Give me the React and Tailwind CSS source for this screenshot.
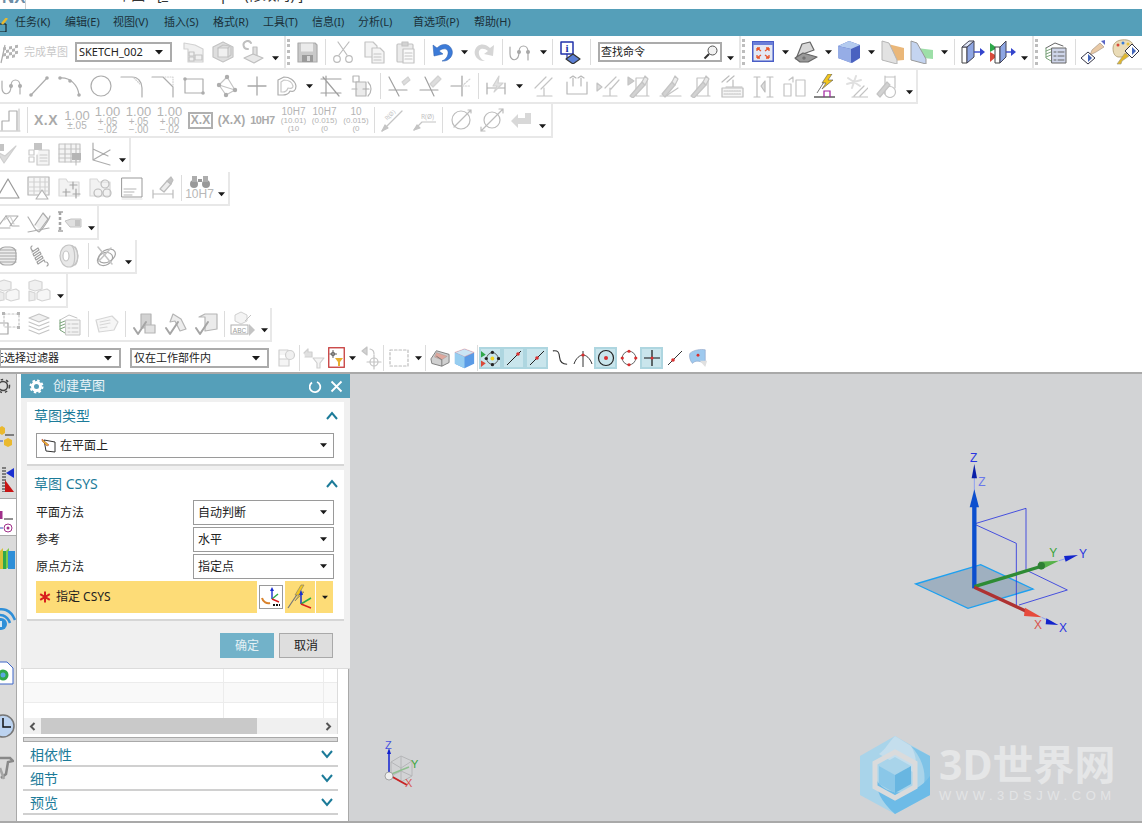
import React from "react";

const g = "#adadad";
const lg = "#d2d2d2";
const V = ({ children, w = 24, h = 24, c = g, sw = 1.2 }) => (
  <svg width={w} height={h} viewBox={`0 0 ${w} ${h}`} fill="none" stroke={c} strokeWidth={sw} strokeLinecap="round" strokeLinejoin="round" className="shrink-0">
    {children}
  </svg>
);
const S = ({ c = "w-[31px]", children }) => <div className={`${c} h-full flex items-center justify-center shrink-0`}>{children}</div>;
const Sep = ({ c = "w-[6px]" }) => (
  <div className={`${c} h-full flex items-center justify-center shrink-0`}>
    <div className="w-[1px] h-[26px] bg-[#dcdcdc]" />
  </div>
);
const Tri = ({ w = 8 }) => (
  <svg width={w} height="5" viewBox="0 0 8 5" className="shrink-0"><path d="M0 0H8L4 4.5Z" fill="#1a1a1a" /></svg>
);
const Ar = ({ c = "w-[12px]", end }) => (
  <div className={`${c} h-full flex justify-center shrink-0 items-center ${end ? "pt-[13px]" : ""}`}><Tri w={7} /></div>
);
const Bar = () => <div className="w-[2px] h-full bg-[#e6e6e6] shrink-0" />;
const Dots = () => (
  <div className="w-[4px] h-full flex justify-center items-center shrink-0">
    <div className="w-[3px] h-[26px] border-l-[3px] border-dotted border-[#bdbdbd]" />
  </div>
);

/* Row 1 icons */
const Flag = () => (
  <svg width="18" height="24" viewBox="0 0 18 24" className="shrink-0">
    <path d="M1 23L5 5" stroke="#aaa" strokeWidth="1.2" />
    <g transform="skewY(-10) translate(0 3)" fill="#b5b5b5">
      <rect x="3" y="5" width="3" height="3" /><rect x="9" y="5" width="3" height="3" /><rect x="15" y="5" width="3" height="3" />
      <rect x="6" y="8" width="3" height="3" /><rect x="12" y="8" width="3" height="3" />
      <rect x="3" y="11" width="3" height="3" /><rect x="9" y="11" width="3" height="3" /><rect x="15" y="11" width="3" height="3" />
      <rect x="6" y="14" width="3" height="3" /><rect x="12" y="14" width="3" height="3" />
    </g>
  </svg>
);
const SheetG = () => (
  <V c="#c2c2c2"><path d="M3 3L14 5L22 9V22H7V9H3Z" fill="#f0f0f0" stroke={lg} /><rect x="8" y="12" width="5" height="4" /><rect x="8" y="17" width="5" height="4" /><rect x="14" y="15" width="7" height="5" /></V>
);
const CubeG = () => (
  <V c="#c4c4c4"><path d="M12 2L22 7V17L12 22L2 17V7Z" fill="#dedede" /><path d="M7 8H17V17H7Z" fill="#f0f0f0" /><path d="M7 8L12 5L19 6L17 8M17 17L20 15V7" /></V>
);
const RobotG = () => (
  <V c="#bfbfbf"><path d="M10 3A4 4 0 1 0 7 9" strokeWidth="2" /><path d="M12 7H16V16H12Z" fill="#e0e0e0" /><path d="M3 18L12 14L22 18L13 23Z" fill="#e8e8e8" /></V>
);
const SaveG = () => (
  <V c="#ababab"><path d="M3 3H20L22 5V22H3Z" fill="#c9c9c9" /><rect x="6" y="3.5" width="12" height="8" fill="#ebebeb" stroke="none" /><rect x="7" y="15" width="11" height="7" fill="#9a9a9a" stroke="none" /><rect x="12" y="16" width="3" height="5" fill="#d8d8d8" stroke="none" /></V>
);
const Scissors = () => (
  <V c="#bcbcbc"><path d="M8 15L18 2M16 15L7 2" /><circle cx="6" cy="19" r="3.3" /><circle cx="18" cy="19" r="3.3" /></V>
);
const CopyG = () => (
  <V c="#c4c4c4"><path d="M2 2H10L14 6V17H2Z" fill="#f4f4f4" /><path d="M9 8H17L21 12V23H9Z" fill="#f4f4f4" /><path d="M11 14H18M11 17H18M11 20H18" /></V>
);
const PasteG = () => (
  <V c="#c4c4c4"><rect x="3" y="4" width="16" height="18" rx="1" fill="#ebebeb" /><rect x="8" y="2" width="6" height="4" fill="#d2d2d2" /><path d="M9 9H20V23H9Z" fill="#fafafa" /><path d="M11 13H18M11 16H18M11 19H18" /></V>
);
const Undo = () => (
  <svg width="24" height="24" viewBox="0 0 24 24" className="shrink-0"><path d="M2 5L3 16L12 14L8 11C13 7 18 9 17 14C16.6 17 14 20 11 21C17 22 23 16 21 10C19 4 12 2 6 8Z" fill="#3c7bd8" stroke="#2a5aa8" strokeWidth=".5" /></svg>
);
const Redo = () => (
  <svg width="24" height="24" viewBox="0 0 24 24" className="shrink-0"><path d="M22 5L21 16L12 14L16 11C11 7 6 9 7 14C7.4 17 10 20 13 21C7 22 1 16 3 10C5 4 12 2 18 8Z" fill="#d6d6d6" /></svg>
);
const Curve = ({ c = "#a8a8a8" }) => (
  <V c={c}><path d="M2 14V7M2 14C2 22 11 22 11 12C11 4 20 4 20 12V20" /><circle cx="11" cy="12" r="1.4" fill={c} /><circle cx="20" cy="12" r="1.4" fill={c} /></V>
);
const Info = () => (
  <V c="#2233aa"><rect x="2" y="2" width="12" height="12" fill="#fff" strokeWidth="1.5" /><text x="8" y="12" fontSize="11" fontWeight="700" textAnchor="middle" fill="#2233aa" stroke="none" fontFamily="Liberation Serif">i</text><path d="M8 14V18" /><path d="M14 14L21 19L14 24L7 19Z" fill="#5b7fd6" stroke="#333" /></V>
);
const Fit = () => (
  <svg width="22" height="22" viewBox="0 0 22 22" className="shrink-0"><rect x=".75" y=".75" width="20.5" height="19.5" fill="#e3e8f3" stroke="#4a5ec7" strokeWidth="1.5" /><rect x="1" y="1" width="20" height="3" fill="#6b7fd8" /><path d="M5 7H8M5 7V10M5 7L9 10M17 7H14M17 7V10M17 7L13 10M5 17H8M5 17V14M5 17L9 14M17 17H14M17 17V14M17 17L13 14" stroke="#e8552c" strokeWidth="1.3" fill="none" /></svg>
);
const Shade = () => (
  <V c="#666"><path d="M2 19L8 4L16 2L20 10L9 14Z" fill="#d8d8d8" /><path d="M1 18L9 13L23 17L14 22H6Z" fill="#999" /><circle cx="10" cy="18" r="1" fill="#eee" /></V>
);
const BlueCube = () => (
  <svg width="24" height="24" viewBox="0 0 24 24" className="shrink-0"><path d="M12 1L23 5V18L15 23L1 18V6Z" fill="#4a62c0" /><path d="M1 6L12 1L23 5L14 9Z" fill="#b4cbef" /><path d="M1 6L14 9V23L1 18Z" fill="#96ade6" /></svg>
);
const PlaneOr = () => (
  <svg width="24" height="24" viewBox="0 0 24 24" className="shrink-0"><path d="M8 4L24 8V20L12 21Z" fill="#eab779" /><path d="M2 1L9 3L17 20V24L2 20Z" fill="#e2e2e2" stroke="#b5b5b5" /></svg>
);
const PlaneGr = () => (
  <svg width="24" height="24" viewBox="0 0 24 24" className="shrink-0"><path d="M8 8L24 10V19L14 18Z" fill="#9ddfa8" /><path d="M2 1L8 3L17 19V24L2 20Z" fill="#c4d4f0" stroke="#999" /></svg>
);
const Slab = () => (
  <svg width="24" height="24" viewBox="0 0 24 24" className="shrink-0"><path d="M1 7L6 7V23H1Z" fill="#fff" stroke="#444" /><path d="M6 7L13 1V17L6 23Z" fill="#8ea6e3" stroke="#445" /><path d="M1 7L8 1H13L6 7Z" fill="#dfe6f6" stroke="#445" /><path d="M13 12H20" stroke="#3344cc" strokeWidth="1.4" /><path d="M19 8L24 12L19 16Z" fill="#3344cc" /></svg>
);
const Slab2 = () => (
  <svg width="26" height="24" viewBox="0 0 26 24" className="shrink-0"><path d="M0 3L7 8L0 12Z" fill="#2ea84a" /><path d="M0 12L7 16L0 22Z" fill="#d94a3a" /><path d="M5 7L10 7V23H5Z" fill="#fff" stroke="#444" /><path d="M10 7L16 1V17L10 23Z" fill="#8ea6e3" stroke="#445" /><path d="M16 12H22" stroke="#3344cc" strokeWidth="1.4" /><path d="M21 8L26 12L21 16Z" fill="#3344cc" /></svg>
);
const LayerList = ({ c = "#666", fill = "#cfd6ea" }) => (
  <V c={c} sw={1}><path d="M2 8L11 3L19 6" /><path d="M2 11L7 9M2 14L7 12M2 17L7 15M2 8V18L7 21" stroke="#7aa37a" /><rect x="8" y="8" width="14" height="15" fill={fill} /><path d="M14 12H20M14 16H20M14 20H20M10 12H12M10 16H12M10 20H12" /></V>
);
const Hand = () => (
  <svg width="26" height="26" viewBox="0 0 26 26" className="shrink-0"><path d="M12 11L20 4L24 8L16 13L10 16Z" fill="#e9c9a5" stroke="#a98" strokeWidth=".7" /><path d="M21 2L25 1L25 6Z" fill="#5a66c5" /><path d="M8 13L15 19L8 25L1 19Z" fill="#fff" stroke="#334" /><path d="M8 15L12 19L8 23Z" fill="#4466bb" /></svg>
);
const Palette = () => (
  <svg width="28" height="26" viewBox="0 0 28 26" className="shrink-0"><path d="M2 9C2 2 10 0 16 1C21 2 23 6 22 9L16 14L14 18H7C3 17 2 13 2 9Z" fill="#eadcb7" stroke="#a9986e" strokeWidth=".8" /><circle cx="7" cy="6" r="1.5" fill="#d94a3a" /><circle cx="12" cy="4" r="1.5" fill="#3a7dd9" /><circle cx="17" cy="5" r="1.5" fill="#e9c23a" /><path d="M6 25L14 14L18 17L11 22L10 25Z" fill="#e0b62e" stroke="#998" strokeWidth=".6" /><path d="M21 5L28 12L21 19L14 12Z" fill="#fff" stroke="#334" /><path d="M21 8L25 12L21 16Z" fill="#4466bb" /></svg>
);

/* Row 2 icons */
const Nd = ({ x, y, r = 1.8 }) => <circle cx={x} cy={y} r={r} fill={g} stroke="none" />;
const LineI = () => <V><path d="M4 21L20 4" /><Nd x={4} y={21} /><Nd x={20} y={4} /></V>;
const ArcI = () => <V><path d="M2 4C12 3 20 11 21 21" /><Nd x={2} y={4} /><Nd x={12} y={7} /><Nd x={21} y={21} /></V>;
const CircleI = () => <V><circle cx="12" cy="12" r="10" /></V>;
const Fillet = () => <V><path d="M1 3H12C18 3 22 8 22 14V23" /><path d="M14 4L21 11" stroke={lg} strokeDasharray="1 1.5" /></V>;
const Chamfer = () => <V><path d="M1 3H12L22 13V23" /><path d="M14 3H22V11" stroke={lg} strokeDasharray="1 1.5" /></V>;
const RectI = () => <V><path d="M3 5H21V19H3Z" /><Nd x={3} y={5} /><Nd x={21} y={19} /></V>;
const Poly = () => <V><path d="M12 3L4 11L11 21L20 16L12 3ZM4 11L20 16" stroke="#c4c4c4" /><Nd x={12} y={3} r={2.2} /><Nd x={4} y={11} r={2.2} /><Nd x={11} y={21} r={2.2} /><Nd x={20} y={16} r={2.2} /></V>;
const Plus = () => <V c="#a8a8a8" sw={1.3}><path d="M12 3V21M3 12H21" /></V>;
const Heart = () => <V><path d="M3 6L9 3C14 3 20 6 21 12C21 17 18 18 15 17C14 20 10 21 8 21H3Z" /><path d="M6 8L9 6C13 6 17 8 18 12C18 14 16 15 13 14C12 17 10 18 8 18H6Z" stroke="#c8c8c8" /></V>;
const Trim = () => <V c="#a0a0a0"><path d="M2 5H22M2 19H22M4 3L20 22M7 2V22" /></V>;
const Convert = () => <V c="#b5b5b5"><rect x="4" y="2" width="6" height="6" /><path d="M7 8H17V22H7Z" fill="#ebebeb" /><path d="M3 15H8M19 8C23 12 23 18 19 22" /><path d="M20 15H14" stroke="#aaa" /></V>;
const X1 = () => <V c="#a0a0a0"><path d="M2 3L12 22M2 16H20" /><path d="M15 8L21 3L23 6L17 11Z" fill="#ddd" stroke={lg} /></V>;
const X2 = () => <V c="#a0a0a0"><path d="M7 3L16 22M2 16H20" /><path d="M12 10L20 2L23 5L15 13Z" fill="#ddd" stroke={lg} /></V>;
const X3 = () => <V c="#a0a0a0"><path d="M3 12H14M14 2V22" /><path d="M14 12L22 5M14 12L22 12" stroke={lg} strokeDasharray="1.5 1.5" /></V>;
const Dim = () => <V><path d="M2 9V20M20 9V20M2 14H20" /><path d="M14 2L8 12H12L9 18L18 9H13Z" fill="#e2e2e2" stroke={lg} /></V>;
const Para = () => <V c="#c4c4c4"><path d="M3 14L14 3M9 15L20 4M12 14V22M5 22H20" /></V>;
const BracketPin = () => <V c="#b8b8b8"><path d="M2 8V20H22V8M8 4V12M16 4V12" /><path d="M5 4L8 2L11 4M13 4L16 2L19 4" /></V>;
const ParaArrow = () => <V c="#c4c4c4"><path d="M9 14L20 3M15 15L23 6M14 14V22M7 22H21" /><path d="M1 9L6 13L1 17Z" fill="#ddd" /></V>;
const Wrench = ({ k }) => (
  <V c="#c4c4c4"><path d="M9 4V22H22M20 4V22M9 4H20" /><path d="M3 22L15 8L18 11L6 24Z" fill="#d2d2d2" /><path d="M15 8L18 2L21 5L18 11Z" fill="#e8e8e8" />{k ? <path d="M1 3L7 7L1 11Z" fill="#ccc" /> : null}</V>
);
const Wrench2 = () => <V c="#c4c4c4"><path d="M2 22H23M8 22L20 14" /><path d="M4 20L14 8L17 11L7 23Z" fill="#d2d2d2" /><path d="M14 8L17 2L20 5L17 11Z" fill="#ececec" /></V>;
const Keyb = () => <V c="#bdbdbd"><path d="M2 8L9 2M7 8L14 2M13 6V13M6 13H22" /><rect x="2" y="14" width="21" height="9" fill="#f6f6f6" /><path d="M4 17H21M4 20H21" strokeDasharray="1.5 1" /></V>;
const Sym = () => <V c="#bdbdbd"><path d="M3 3H9M3 23H9M6 3V23M16 3H22M16 23H22M19 3V23" /><path d="M10 12L14 7V18Z" fill="#ddd" /></V>;
const Rebar = () => <V c="#c4c4c4"><path d="M2 22V10H9V22H2ZM14 22V6H23V22H14Z" /><path d="M7 6L11 3V8" /></V>;
const Bolt = () => (
  <svg width="24" height="24" viewBox="0 0 24 24" className="shrink-0"><path d="M15 0L9 9H13L9 15L20 6H15L19 0Z" fill="#f2c61f" stroke="#555" strokeWidth=".6" /><path d="M4 19L11 8" stroke="#777" /><path d="M1 23H22" stroke="#333" strokeWidth="1.2" /><path d="M11 23V17H17V23" stroke="#a020a0" strokeWidth="1.2" fill="none" /></svg>
);
const Spark = () => <V c="#c4c4c4"><path d="M4 4L16 12M12 2L8 14M3 10L17 6" stroke="#e0e0e0" strokeWidth="2" /><path d="M10 22L20 12M16 22L24 14M8 23H24" /></V>;
const WCirc = () => <V c="#c4c4c4"><path d="M10 2V20M20 2V14M10 3H20" /><circle cx="15" cy="18" r="5.5" /><path d="M2 20L12 8L15 11L5 23Z" fill="#d2d2d2" /></V>;

/* Row 3 */
const Dimbox = () => <V><path d="M4 22V13H11V3H19V22" /><path d="M1 23H22M21 1V22" strokeWidth=".8" /></V>;
const TolT = ({ a = "1.00", b, d }) => (
  <div className="flex flex-col items-center text-[#b4b4b4] [font-family:'Liberation_Sans',sans-serif] leading-none">
    <span className="text-[13px] leading-[12px]">{a}</span>
    <span className="text-[10px] leading-[8px]">{b}</span>
    {d ? <span className="text-[10px] leading-[8px]">{d}</span> : null}
  </div>
);
const Fit3 = ({ a, b, c }) => (
  <div className="flex flex-col items-center text-[#b4b4b4] [font-family:'Liberation_Sans',sans-serif]">
    <span className="text-[10px] leading-[10px]">{a}</span>
    <span className="text-[8px] leading-[8px]">{b}</span>
    <span className="text-[8px] leading-[8px]">{c}</span>
  </div>
);
const R1 = () => <V c="#c4c4c4"><path d="M2 23L22 3" /><path d="M2 23L8 20L5 17Z" fill="#c4c4c4" /><text x="6" y="10" fontSize="6" fill="#c4c4c4" stroke="none" transform="rotate(-45 10 10)">R(Ø)</text></V>;
const R2 = () => <V c="#c4c4c4"><path d="M2 22L10 14H24" /><path d="M2 22L8 20L5 17Z" fill="#c4c4c4" /><text x="9" y="11" fontSize="6.5" fill="#c4c4c4" stroke="none">R(Ø)</text></V>;
const Dia = () => <V c="#bcbcbc"><circle cx="12" cy="12" r="9" /><path d="M5 19L22 2M19 2H22V5" /></V>;
const Dia2 = () => <V c="#bcbcbc"><circle cx="12" cy="12" r="8" /><path d="M1 23L23 1M19 1H23V5M1 19V23H5" /></V>;
const Ret = () => (
  <svg width="24" height="24" viewBox="0 0 24 24" className="shrink-0"><path d="M2 13L9 6V10H16V5H22V16H9V20Z" fill="#d8d8d8" /></svg>
);

/* Rows 4–9 */
const Chk = () => <V c="#cfcfcf"><path d="M1 10L8 21L20 4L9 14Z" fill="#dcdcdc" /><rect x="0" y="2" width="8" height="7" fill="#c4c4c4" stroke="none" /></V>;
const Tree = () => <V c="#cacaca"><rect x="7" y="1" width="8" height="7" fill="#c4c4c4" stroke="none" /><rect x="2" y="8" width="5" height="5" /><rect x="2" y="15" width="5" height="5" /><path d="M12 8H22V23H10V13" fill="#f4f4f4" /><path d="M13 13H20M13 16H20M13 19H20" /></V>;
const Grid = () => <V c="#c4c4c4"><rect x="1" y="2" width="21" height="18" fill="#f4f4f4" /><path d="M1 7H22M1 12H22M1 16H22M7 2V20M13 2V20M18 2V20" /><rect x="14" y="11" width="9" height="7" fill="#b5b5b5" stroke="none" /><path d="M18 18V23" /></V>;
const Axes = () => <V c="#adadad"><path d="M5 1V18L22 8M5 18L22 23M5 18V7L20 14" /></V>;
const Tria = () => <V c="#9a9a9a"><path d="M12 3L23 22H1Z" /></V>;
const TableT = () => <V c="#b5b5b5"><rect x="1" y="1" width="21" height="18" fill="#f6f6f6" /><path d="M1 6H22M1 11H22M1 15H22M7 1V19M13 1V19M18 1V19" stroke="#d2d2d2" /><path d="M15 14L21 23H9Z" fill="#fff" /></V>;
const Folder = ({ circ }) => (
  <V c="#bcbcbc"><path d="M1 3H8L10 6H21V20H1Z" fill="#f2f2f2" stroke="#d8d8d8" />{circ ? (<><circle cx="16" cy="8" r="4" /><circle cx="9" cy="17" r="4" /><circle cx="18" cy="17" r="4" /></>) : (<path d="M15 6V13M12 9H19M8 13V20M5 16H12M18 13V22M15 18H22" stroke="#a5a5a5" />)}</V>
);
const Note = () => <V c="#777" sw={1}><rect x="2" y="2" width="20" height="19" fill="#fff" stroke="#999" /><path d="M4 13H16M4 16H14M4 19H12" stroke="#b5b5b5" /><path d="M2 23H22" stroke="#e0e0e0" /></V>;
const BrushD = () => <V c="#bcbcbc"><path d="M2 14V22M22 14V22M2 18H22" /><path d="M9 13L16 5L20 8L13 16Z" fill="#ececec" /><path d="M16 5L20 1L22 4L20 8Z" fill="#c4c4c4" /></V>;
const Binoc = () => (
  <div className="flex flex-col items-center">
    <svg width="22" height="12" viewBox="0 0 22 12"><circle cx="5" cy="8" r="4" fill="#999" /><circle cx="17" cy="8" r="4" fill="#999" /><rect x="3" y="0" width="5" height="6" fill="#adadad" /><rect x="14" y="0" width="5" height="6" fill="#adadad" /><rect x="9" y="3" width="4" height="3" fill="#999" /></svg>
    <span className="text-[12px] leading-[12px] text-[#b8b8b8] [font-family:'Liberation_Sans',sans-serif]">10H7</span>
  </div>
);
const Surf1 = () => <V c="#adadad"><path d="M1 18L10 6H22L14 16" /><path d="M10 6L16 16H23M1 18H14" /><path d="M8 10L14 6L18 14" stroke="#d0d0d0" /></V>;
const Surf2 = () => <V c="#adadad"><path d="M1 7C6 14 7 20 12 22C15 20 22 10 23 6" /><path d="M8 15L16 3L21 9L13 20" fill="#f0f0f0" /><path d="M1 22L22 18" /></V>;
const Rect3 = () => (
  <svg width="26" height="24" viewBox="0 0 26 24" className="shrink-0"><path d="M1 2H6M1 21H6" stroke="#a5a5a5" strokeWidth="1.5" /><path d="M3 2V21" stroke="#a5a5a5" strokeWidth="2.5" strokeDasharray="3 2" /><path d="M8 11L14 9H24V17H13Z" fill="#e0e0e0" stroke="#c4c4c4" /><rect x="18" y="10" width="5" height="6" fill="#c4c4c4" /></svg>
);
const Coil = () => <V c="#a8a8a8"><rect x="3" y="3" width="17" height="18" rx="6" fill="#ebebeb" /><path d="M3 6H20M3 9H20M3 12H20M3 15H20M3 18H20" /></V>;
const Spring = () => <V c="#a0a0a0"><path d="M5 2C3 3 4 6 6 7M20 22C22 21 21 18 19 18" /><path d="M5 8L11 4L12 6L6 10L7 12L13 8L14 10L8 14L9 16L15 12L16 14L10 18L11 20L17 16L18 18" /></V>;
const Tire = () => <V c="#c4c4c4"><ellipse cx="11" cy="12" rx="9" ry="11" fill="#e8e8e8" /><ellipse cx="8" cy="12" rx="3" ry="5" fill="#fff" /><path d="M14 2C17 5 18 19 14 22M17 3C20 6 21 18 17 21" /></V>;
const Rings = () => <V c="#a5a5a5"><ellipse cx="13" cy="12" rx="9" ry="6" transform="rotate(-30 13 12)" /><ellipse cx="11" cy="15" rx="8" ry="6" transform="rotate(-30 11 15)" /><path d="M4 3L18 20M17 4L4 18" stroke="#c4c4c4" strokeWidth="1.5" /></V>;
const Boxes = () => <V c="#d4d4d4"><path d="M8 2L15 4V11L8 13L2 11V4Z" fill="#f0f0f0" /><path d="M2 13L8 15V22L2 23Z" fill="#ececec" /><path d="M12 13L20 11L23 13V21L15 23L10 21V15Z" fill="#f6f6f6" /></V>;
const Marquee = () => <V c="#a5a5a5"><rect x="1" y="11" width="11" height="11" /><rect x="8" y="2" width="15" height="13" stroke="#c4c4c4" strokeDasharray="2 2" /><rect x="6" y="0" width="3" height="3" fill="#b5b5b5" stroke="none" /><rect x="21" y="0" width="3" height="3" fill="#b5b5b5" stroke="none" /><rect x="21" y="14" width="3" height="3" fill="#b5b5b5" stroke="none" /></V>;
const Stack = () => <V c="#c4c4c4"><path d="M2 6L12 2L22 6L12 10Z" fill="#f0f0f0" /><path d="M2 10L12 14L22 10M2 14L12 18L22 14M2 18L12 22L22 18" /></V>;
const Tag = () => <V c="#d6d6d6"><path d="M1 8L17 4L23 10L19 18L4 20Z" fill="#f6f6f6" /><path d="M5 10L15 8M5 13L15 11M5 16L12 15" /></V>;
const Cad1 = () => <V c="#b5b5b5"><path d="M9 2H19V16H9Z" fill="#d2d2d2" /><path d="M13 13H23V21H13Z" fill="#e2e2e2" /><path d="M2 16L6 22L14 10" stroke="#a5a5a5" strokeWidth="2" /></V>;
const Cad2 = () => <V c="#b5b5b5"><path d="M9 2L17 7L22 17L16 19L11 9L6 10Z" fill="#ededed" /><path d="M2 16L6 22L14 10" stroke="#a5a5a5" strokeWidth="2" /></V>;
const Cad3 = () => <V c="#b5b5b5"><path d="M5 5L11 2H23V17L11 19V5H5Z" fill="#ebebeb" /><path d="M2 16L6 22L14 10" stroke="#a5a5a5" strokeWidth="2" /></V>;
const Abc = () => (
  <svg width="26" height="26" viewBox="0 0 26 26" className="shrink-0"><path d="M5 4L11 1L17 4V10L11 13L5 10Z" fill="#f4f4f4" stroke="#d0d0d0" /><rect x="1" y="14" width="17" height="9" fill="#fff" stroke="#b0b0b0" /><text x="9.5" y="21.5" fontSize="6.5" textAnchor="middle" fill="#999" fontFamily="Liberation Sans">ABC</text><path d="M19 13L25 19L19 25Z" fill="#c4c4c4" /><path d="M15 10L21 4" stroke="#c4c4c4" /></svg>
);

/* Filter row */
const Fa = () => <V c="#cfcfcf"><path d="M5 9V20H15V9M5 4H14V13H5Z" fill="#f4f4f4" /><circle cx="16" cy="9" r="4.5" fill="#f0f0f0" /></V>;
const Fb = () => <V c="#cfcfcf"><path d="M3 7L7 3V6H11V11H4" fill="#e0e0e0" /><path d="M12 12H23L19 17V22H16V17Z" fill="#f4f4f4" /></V>;
const Fc = () => (
  <svg width="17" height="22" viewBox="0 0 17 22" className="shrink-0"><rect x=".75" y=".75" width="15.5" height="19.5" fill="#fff" stroke="#c63a3a" strokeWidth="1.3" /><path d="M5 3V11M1.5 7H9" stroke="#666" /><circle cx="5" cy="7" r="1.8" fill="none" stroke="#666" /><path d="M7 11H15L12 15V19H10V15Z" fill="#e7ae2e" /></svg>
);
const Fd = () => <V c="#c4c4c4"><path d="M12 3A5 5 0 0 1 16 8" /><path d="M4 5L9 1V9Z" fill="#d2d2d2" /><circle cx="16" cy="16" r="4" /><path d="M16 9V23M9 16H23" /></V>;
const Fe = () => <V c="#bcbcbc"><rect x="3" y="4" width="18" height="16" strokeDasharray="2.5 2" /></V>;
const Ff = () => (
  <svg width="22" height="20" viewBox="0 0 24 22" className="shrink-0"><path d="M2 12L8 3L22 7V16L14 20L3 17Z" fill="#d0d0d0" stroke="#777" /><path d="M8 5L20 9L14 13L6 10Z" fill="#e0a79c" stroke="#999" strokeWidth=".5" /><path d="M8 9L14 13V20" stroke="#777" fill="none" /></svg>
);
const Fg = () => (
  <svg width="21" height="21" viewBox="0 0 24 24" className="shrink-0"><path d="M12 1L23 5V18L12 23L1 18V5Z" fill="#5a9be6" /><path d="M1 5L12 1L23 5L12 10Z" fill="#cbe5f4" stroke="#e88" strokeWidth=".5" /><path d="M12 10V23L1 18V5Z" fill="#96cdf0" /></svg>
);
const Sel = ({ children, c = "w-[23px]" }) => (
  <div className={`${c} h-[22px] bg-[#c9e5ec] border-2 border-[#aed6e0] flex items-center justify-center shrink-0`}>{children}</div>
);
const NearI = () => (
  <svg width="19" height="19" viewBox="0 0 20 20" className="shrink-0"><path d="M0 2L5 6L0 9Z" fill="#2ea84a" /><path d="M0 12L5 15L0 19Z" fill="#d94a3a" /><circle cx="12" cy="10" r="6" fill="none" stroke="#555" strokeWidth="1" /><circle cx="12" cy="10" r="2" fill="#f2d21f" /><circle cx="12" cy="3.5" r="1.7" fill="#222" /><circle cx="12" cy="16.5" r="1.7" fill="#222" /><circle cx="5.5" cy="10" r="1.7" fill="#222" /><circle cx="18.5" cy="10" r="1.7" fill="#222" /></svg>
);
const EndI = () => <svg width="18" height="18" viewBox="0 0 18 18" className="shrink-0"><path d="M2 16L16 2" stroke="#222" /><circle cx="13" cy="5" r="1.8" fill="#d93030" /></svg>;
const MidI = () => <svg width="18" height="18" viewBox="0 0 18 18" className="shrink-0"><path d="M2 16L16 2" stroke="#222" /><circle cx="9" cy="9" r="1.8" fill="#d93030" /></svg>;
const Sc = () => <svg width="16" height="18" viewBox="0 0 18 20" className="shrink-0"><path d="M1 2C7 1 8 4 8.5 9C9 15 12 17 17 17" stroke="#333" strokeWidth="1.2" fill="none" /></svg>;
const Tang = () => <svg width="20" height="20" viewBox="0 0 20 20" className="shrink-0"><path d="M1 16C3 10 7 7 10 7C13 7 17 10 19 16M10 3V19" stroke="#333" fill="none" /><circle cx="10" cy="7" r="1.6" fill="#d93030" /></svg>;
const Cen = () => <svg width="18" height="18" viewBox="0 0 18 18" className="shrink-0"><circle cx="9" cy="9" r="7.5" fill="none" stroke="#222" strokeWidth="1.2" /><circle cx="9" cy="9" r="2" fill="#d93030" /></svg>;
const Quad = () => <svg width="18" height="18" viewBox="0 0 20 20" className="shrink-0"><circle cx="10" cy="10" r="7.5" fill="none" stroke="#555" /><circle cx="10" cy="2.5" r="1.8" fill="#d93030" /><circle cx="10" cy="17.5" r="1.8" fill="#d93030" /><circle cx="2.5" cy="10" r="1.8" fill="#d93030" /><circle cx="17.5" cy="10" r="1.8" fill="#d93030" /></svg>;
const Inter = () => <svg width="18" height="18" viewBox="0 0 18 18" className="shrink-0"><path d="M9 1V17M1 9H17" stroke="#111" strokeWidth="1.2" /><circle cx="9" cy="9" r="1.5" fill="#d93030" /></svg>;
const Pt = () => <svg width="18" height="18" viewBox="0 0 18 18" className="shrink-0"><path d="M2 16L16 2" stroke="#333" /><circle cx="7" cy="11" r="1.8" fill="#d93030" /></svg>;
const Sf = () => <svg width="20" height="20" viewBox="0 0 22 22" className="shrink-0"><path d="M2 6C6 2 14 1 19 2V18C14 14 8 13 5 17C2 14 1 9 2 6Z" fill="#9ec9ee" stroke="#8a9dc0" strokeWidth=".6" /><circle cx="11" cy="8" r="1.6" fill="#d93030" /><path d="M13 14L21 14L19 21Z" fill="#e0e0e0" /></svg>;

const Sl = ({ c, children, tri = 8 }) => (
  <div className={`${c} h-[20px] bg-white border-2 border-[#ababab] flex items-center justify-between pl-[2px] pr-[7px] shrink-0 overflow-hidden text-[#222] text-[11px] whitespace-nowrap`}>
    <span>{children}</span><Tri w={tri} />
  </div>
);
const TB = ({ children }) => <div className="w-fit h-[34px] flex items-center border-r-2 border-b-2 border-[#e8e8e8] overflow-hidden shrink-0">{children}</div>;
const F1 = ({ children }) => <div className="-ml-[8px] w-[31px] h-full flex items-center justify-center shrink-0">{children}</div>;

const DSel = ({ c, children }) => (
  <div className={`${c} bg-white border border-[#9a9a9a] flex items-center justify-between pl-[4px] pr-[6px] text-[12px] text-[#222] shrink-0`}>
    <div className="flex items-center gap-[4px]">{children}</div><Tri w={7} />
  </div>
);
const Chevron = ({ up }) => (
  <svg width="12" height="9" viewBox="0 0 12 9" className="shrink-0"><path d={up ? "M1 8L6 2L11 8" : "M1 1L6 7L11 1"} fill="none" stroke="#1c7b99" strokeWidth="2" /></svg>
);
const Fold = ({ children }) => (
  <div className="h-[24px] border-b-2 border-[#d0d0d0] flex items-center justify-between pl-[7px] pr-[5px] text-[14px] text-[#1c7b99]">
    <span>{children}</span><Chevron />
  </div>
);

const RB = ({ c, children }) => <div className={`${c} w-full flex items-center overflow-hidden shrink-0`}>{children}</div>;

const CSYS = () => (
  <svg width="200" height="200" viewBox="0 0 600 600" className="absolute left-[550px] top-[66px]" fontFamily="Liberation Sans" fontSize="36">
    <path d="M50 432L245 374L402 447L207 505Z" fill="#8ea4b8" fillOpacity=".75" stroke="#1ea0f0" strokeWidth="4" />
    <path d="M225 252L381 205V392M225 252L352 310V495" stroke="#2a35e0" strokeWidth="2.5" fill="none" />
    <path d="M385 392L505 450L360 495" stroke="#2a35e0" strokeWidth="2.5" fill="none" />
    <path d="M226 445V110" stroke="#8f9ff0" strokeWidth="3" />
    <path d="M226 445V200" stroke="#0c4fce" strokeWidth="13" />
    <path d="M212 202L226 148L240 202Z" fill="#0c4fce" />
    <path d="M218 115L226 72L234 115Z" fill="#0a1fa8" />
    <path d="M226 440L430 378" stroke="#2e8b34" strokeWidth="10" />
    <path d="M420 365L480 362L425 390Z" fill="#57b24b" />
    <circle cx="427" cy="377" r="11" fill="#2e7f34" />
    <path d="M480 362L500 356" stroke="#8f9ff0" strokeWidth="3" />
    <path d="M495 348L537 345L500 365Z" fill="#1224cc" />
    <path d="M226 442L385 515" stroke="#ae3232" strokeWidth="10" />
    <path d="M378 503L428 532L375 528Z" fill="#e64a3c" />
    <path d="M428 532L445 540" stroke="#8f9ff0" strokeWidth="3" />
    <path d="M442 535L478 555L440 553Z" fill="#1224cc" />
    <text x="213" y="66" fill="#2a35e0">Z</text>
    <text x="238" y="138" fill="#6a78ea">Z</text>
    <text x="451" y="350" fill="#3aa53a">Y</text>
    <text x="540" y="355" fill="#2a35e0">Y</text>
    <text x="405" y="568" fill="#d9534f">X</text>
    <text x="480" y="577" fill="#2a35e0">X</text>
  </svg>
);
const Triad = () => (
  <svg width="50" height="60" viewBox="0 0 50 60" className="absolute left-[30px] top-[366px]" fontFamily="Liberation Sans" fontSize="11">
    <path d="M12 22L22 16L33 21V36L22 42L12 36ZM12 22L22 28L33 21M22 28V42M12 36L22 31L33 36M22 16V31" fill="none" stroke="#b5b6b8" />
    <path d="M10 11V32" stroke="#1020d0" strokeWidth="1.5" />
    <path d="M8 14L10 8L12 14Z" fill="#1020d0" />
    <path d="M10 35L30 27" stroke="#8fbf8f" strokeWidth="1.5" />
    <path d="M10 35L28 45" stroke="#c82424" strokeWidth="2" />
    <circle cx="10" cy="36" r="4" fill="#eee" stroke="#888" strokeWidth=".7" />
    <text x="6" y="9" fill="#4a55e0">Z</text>
    <text x="32" y="28" fill="#3aa53a">Y</text>
    <text x="26" y="47" fill="#d9534f">X</text>
  </svg>
);
const Logo = () => (
  <svg width="72" height="79" viewBox="0 0 72 79" className="shrink-0">
    <path d="M36 0L71 20V59L36 78L1 59V20Z" fill="#a9d4ea" />
    <path d="M36 0L52 10C58 20 58 30 54 36L36 27L20 18C26 14 30 6 36 0Z" fill="#c4deed" />
    <path d="M52 10L71 20V59L60 62C70 45 66 25 52 10Z" fill="#7fc3e7" />
    <path d="M71 40V59L36 78C22 66 16 52 18 45C28 60 55 62 71 40Z" fill="#6dbbe7" />
    <path d="M36 16L56 27V51L36 62L16 51V27Z" fill="none" stroke="#dadbdc" strokeWidth="5" />
    <path d="M36 21L52 30L36 39L20 30Z" fill="#a9d4ea" />
    <path d="M20 30L36 39V57L20 48Z" fill="#8ac7e8" />
    <path d="M52 30L36 39V57L52 48Z" fill="#68b6e1" />
  </svg>
);

const leftIcon = {
  gear: <svg width="20" height="20" viewBox="0 0 20 20"><circle cx="5" cy="10" r="4.5" fill="none" stroke="#444" strokeWidth="1.5" /><circle cx="5" cy="10" r="6.5" fill="none" stroke="#444" strokeWidth="1.5" strokeDasharray="2.5 3" /></svg>,
  asm: <svg width="20" height="28" viewBox="0 0 20 28"><path d="M0 5L3 3L6 5V10L3 12L0 10Z" fill="#eab92f" /><path d="M6 12H15" stroke="#222" /><path d="M0 18H4" stroke="#3355bb" /><path d="M5 17L9 15L13 17V22L9 24L5 22Z" fill="#eab92f" /></svg>,
  con: <svg width="16" height="26" viewBox="0 0 16 26"><path d="M5 1V26" stroke="#222" strokeDasharray="2 1" /><path d="M3 1V26" stroke="#222" strokeDasharray="2 1" /><path d="M14 2V12L6 7Z" fill="#1a2fd0" /><path d="M5 14L14 26H5Z" fill="#c81414" /></svg>,
  part: <svg width="16" height="24" viewBox="0 0 16 24"><rect x="0" y="1" width="2.5" height="8" fill="#a0308a" /><path d="M4 9H13" stroke="#222" /><path d="M0 18H3" stroke="#3355bb" /><circle cx="8" cy="18" r="4" fill="none" stroke="#a0308a" /><circle cx="8" cy="18" r="1.5" fill="#a0308a" /></svg>,
  books: <svg width="15" height="24" viewBox="0 0 15 24"><path d="M0 4L3 1V22H0Z" fill="#d8c03a" /><path d="M3 4H6V22H3Z" fill="#2ea84a" /><path d="M6 4L9 1V20L6 22Z" fill="#7ecb4a" /><rect x="8" y="4" width="7" height="18" fill="#2f8fd8" /></svg>,
  wifi: <svg width="16" height="26" viewBox="0 0 16 26"><path d="M-6 6C2 0 11 4 15 14M-6 11C0 7 7 9 10 17" fill="none" stroke="#2f8fd8" strokeWidth="2.5" /><circle cx="1" cy="18" r="6" fill="#2f8fd8" /><path d="M1 15V21" stroke="#fff" strokeWidth="1.6" /></svg>,
  doc: <svg width="14" height="24" viewBox="0 0 14 24"><path d="M-2 1H7L13 7V23H-2Z" fill="#fff" stroke="#3f66c8" /><circle cx="3" cy="14" r="5.5" fill="#2ea84a" /><circle cx="3" cy="14" r="2.5" fill="#5aa7e0" /></svg>,
  clock: <svg width="15" height="24" viewBox="0 0 15 24"><circle cx="3" cy="12" r="11" fill="#bcd3f0" stroke="#777" strokeWidth="1.5" /><path d="M3 4V13H11" stroke="#111" strokeWidth="1.5" fill="none" /></svg>,
  ham: <svg width="14" height="24" viewBox="0 0 14 24"><path d="M0 2L10 2L13 5L8 6L6 18L1 22" fill="none" stroke="#888" strokeWidth="2.5" /><path d="M0 12L4 23" stroke="#a5a5a5" strokeWidth="2.5" /></svg>,
};

export default function App() {
  return (
    <div className="w-[1142px] h-[828px] bg-white overflow-hidden relative flex flex-col [font-family:'Noto_Sans','Noto_Sans_CJK_SC',sans-serif]">
      {/* Title fragment */}
      <div className="h-[9px] flex overflow-hidden shrink-0">
        <div className="w-[26px] h-[9px] overflow-hidden flex items-end pl-[2px] border-r border-[#cfcfcf]">
          <span className="text-[17px] leading-[17px] font-bold text-[#6d8ea6] mb-[3px] [font-family:'Liberation_Sans',sans-serif]">NX</span>
        </div>
        <div className="pl-[41px] h-[9px] flex items-end overflow-hidden">
          <span className="text-[14px] leading-[14px] text-[#333] whitespace-nowrap mb-[7px]">NX 11 - 草图 - [_model1.prt (修改的) ]</span>
        </div>
      </div>
      {/* Menu */}
      <div className="h-[27px] bg-[#559fb9] flex items-center text-[11px] text-[#1b2f38] shrink-0 relative whitespace-nowrap">
        <svg width="8" height="14" viewBox="0 0 8 14" className="absolute left-0 top-[9px]"><path d="M0 6H6V14H0" fill="none" stroke="#111" /><path d="M2 6L7 0" stroke="#e7b92f" strokeWidth="2.5" /></svg>
        <span className="ml-[15px] w-[50px]">任务(K)</span>
        <span className="w-[48px]">编辑(E)</span>
        <span className="w-[51px]">视图(V)</span>
        <span className="w-[49px]">插入(S)</span>
        <span className="w-[50px]">格式(R)</span>
        <span className="w-[49px]">工具(T)</span>
        <span className="w-[46px]">信息(I)</span>
        <span className="w-[55px]">分析(L)</span>
        <span className="w-[61px]">首选项(P)</span>
        <span>帮助(H)</span>
      </div>
      {/* Row 1 */}
      <RB c="h-[34px] border-b-2 border-[#e8e8e8]">
        <S c="w-[22px] justify-start"><Flag /></S>
        <div className="w-[53px] pl-[2px] text-[11px] text-[#c8c8c8] shrink-0">完成草图</div>
        <Sl c="w-[97px]">SKETCH_002</Sl>
        <div className="w-[6px] shrink-0" />
        <S c="w-[30px]"><SheetG /></S><S c="w-[30px]"><CubeG /></S><S c="w-[30px]"><RobotG /></S>
        <Ar c="w-[14px]" end /><div className="w-[2px] shrink-0" /><Bar /><Dots />
        <S c="w-[33px]"><SaveG /></S><Sep c="w-[4px]" />
        <S c="w-[32px]"><Scissors /></S><S><CopyG /></S><S><PasteG /></S><Sep />
        <S c="w-[32px]"><Undo /></S><Ar c="w-[10px]" /><S c="w-[30px]"><Redo /></S><Sep />
        <S c="w-[30px]"><Curve /></S><Ar c="w-[16px]" /><Sep c="w-[3px]" />
        <S c="w-[33px]"><Info /></S><Sep />
        <div className="w-[5px] shrink-0" />
        <div className="w-[124px] h-[20px] bg-white border-2 border-[#ababab] flex items-center justify-between pl-[1px] pr-[2px] text-[11px] text-[#222] shrink-0">
          <span>查找命令</span>
          <svg width="15" height="15" viewBox="0 0 15 15"><circle cx="9.5" cy="5.5" r="4.5" fill="#f2f2f2" stroke="#555" /><path d="M6 9L1.5 13.5" stroke="#333" strokeWidth="2" /></svg>
        </div>
        <Ar c="w-[17px]" end /><Bar /><Dots />
        <S c="w-[35px]"><Fit /></S><Ar c="w-[10px]" />
        <S c="w-[32px]"><Shade /></S><Ar />
        <S c="w-[30px]"><BlueCube /></S><Ar c="w-[14px]" />
        <S c="w-[28px]"><PlaneOr /></S><S c="w-[30px]"><PlaneGr /></S><Ar c="w-[17px]" />
        <Sep c="w-[2px]" />
        <S c="w-[35px]"><Slab /></S><S c="w-[26px]"><Slab2 /></S><Ar c="w-[16px]" end /><Bar /><Dots />
        <S c="w-[36px]"><LayerList /></S><Sep c="w-[2px]" />
        <S c="w-[34px]"><Hand /></S><S c="w-[30px]"><Palette /></S>
      </RB>
      {/* Row 2 */}
      <TB>
        <S c="w-[24px] justify-start"><Curve c="#adadad" /></S>
        <S c="w-[30px]"><LineI /></S><S><ArcI /></S><S><CircleI /></S><S><Fillet /></S><S><Chamfer /></S>
        <S c="w-[32px]"><RectI /></S><S c="w-[33px]"><Poly /></S><S c="w-[28px]"><Plus /></S><S><Heart /></S><Ar c="w-[14px]" />
        <S c="w-[30px]"><Trim /></S><S c="w-[30px]"><Convert /></S><Sep c="w-[8px]" />
        <S c="w-[30px]"><X1 /></S><S><X2 /></S><S c="w-[29px]"><X3 /></S><Sep c="w-[8px]" />
        <S c="w-[30px]"><Dim /></S><Ar c="w-[14px]" />
        <S c="w-[35px]"><Para /></S><S><BracketPin /></S><S><ParaArrow /></S><S><Wrench k /></S><S><Wrench2 /></S>
        <S c="w-[30px]"><Wrench /></S><S c="w-[33px]"><Keyb /></S><S c="w-[29px]"><Sym /></S><S c="w-[33px]"><Rebar /></S>
        <S c="w-[30px]"><Bolt /></S><S><Spark /></S><S><WCirc /></S><Ar c="w-[14px]" end />
      </TB>
      {/* Row 3 */}
      <TB>
        <S c="w-[24px] justify-start"><div className="-ml-[2px]"><Dimbox /></div></S><Sep />
        <S c="w-[32px]"><span className="text-[14px] tracking-[0.5px] font-bold text-[#a9a9a9] [font-family:'Liberation_Sans',sans-serif]">X.X</span></S>
        <S c="w-[30px]"><TolT b="±.05" /></S>
        <S><TolT b="+.05" d="−.02" /></S>
        <S><TolT b="+.05" d="−.00" /></S>
        <S><TolT b="+.00" d="−.02" /></S>
        <S><span className="border-2 border-[#b0b0b0] px-[1px] text-[12px] leading-[13px] font-bold text-[#a9a9a9] [font-family:'Liberation_Sans',sans-serif]">X.X</span></S>
        <S><span className="text-[12px] font-bold text-[#a9a9a9] whitespace-nowrap [font-family:'Liberation_Sans',sans-serif]">(X.X)</span></S>
        <S><span className="text-[11px] text-[#ababab] font-bold tracking-[-0.4px] [font-family:'Liberation_Sans',sans-serif]">10H7</span></S>
        <S><Fit3 a="10H7" b="(10.01)" c="(10" /></S>
        <S><Fit3 a="10H7" b="(0.015)" c="(0" /></S>
        <S c="w-[32px]"><Fit3 a="10" b="(0.015)" c="(0" /></S>
        <Sep c="w-[4px]" />
        <S c="w-[32px]"><R1 /></S><S><R2 /></S><Sep />
        <S><Dia /></S><S><Dia2 /></S><S c="w-[28px]"><Ret /></S><Ar c="w-[15px]" end /><div className="w-[1px] shrink-0" />
      </TB>
      {/* Row 4 */}
      <TB>
        <F1><Chk /></F1><S><Tree /></S><S><Grid /></S><S c="w-[30px]"><Axes /></S><Ar c="w-[14px]" end />
      </TB>
      {/* Row 5 */}
      <TB>
        <F1><Tria /></F1><S><TableT /></S><S><Folder /></S><S><Folder circ /></S><S><Note /></S><S><BrushD /></S><Sep />
        <S><Binoc /></S><Ar end /><div className="w-[1px] shrink-0" />
      </TB>
      {/* Row 6 */}
      <TB>
        <F1><Surf1 /></F1><S><Surf2 /></S><S><Rect3 /></S><Ar end />
      </TB>
      {/* Row 7 */}
      <TB>
        <F1><Coil /></F1><S><Spring /></S><S><Tire /></S><Sep /><S c="w-[30px]"><Rings /></S><Ar c="w-[14px]" end />
      </TB>
      {/* Row 8 */}
      <TB>
        <F1><Boxes /></F1><S><Boxes /></S><Ar end />
      </TB>
      {/* Row 9 */}
      <TB>
        <F1><Marquee /></F1><S><Stack /></S><S><LayerList c="#c4c4c4" fill="#f2f2f2" /></S><Sep />
        <S><Tag /></S><Sep /><S c="w-[32px]"><Cad1 /></S><S><Cad2 /></S><S c="w-[30px]"><Cad3 /></S><Sep />
        <S><Abc /></S><Ar end />
      </TB>
      {/* Filter row */}
      <RB c="h-[32px] pt-[2px] border-b-2 border-[#a9a9a9]">
        <div className="w-[122px] -ml-[1px] h-[20px] bg-white border-2 border-[#ababab] flex items-center justify-between pr-[7px] text-[11px] text-[#222] shrink-0 overflow-hidden whitespace-nowrap">
          <span className="-ml-[8px]">无选择过滤器</span><Tri />
        </div>
        <div className="w-[9px] shrink-0" />
        <Sl c="w-[139px]">仅在工作部件内</Sl>
        <div className="w-[5px] shrink-0" />
        <S c="w-[24px]"><Fa /></S><Sep c="w-[2px]" />
        <S c="w-[26px]"><Fb /></S><S c="w-[20px]"><Fc /></S><Ar c="w-[12px]" /><S c="w-[24px]"><Fd /></S><Sep c="w-[3px]" />
        <S c="w-[28px]"><Fe /></S><Ar c="w-[10px]" /><Sep c="w-[4px]" />
        <S c="w-[26px]"><Ff /></S><S c="w-[22px]"><Fg /></S><Sep c="w-[4px]" />
        <Sel><NearI /></Sel><Sel><EndI /></Sel><Sel><MidI /></Sel>
        <S c="w-[24px]"><Sc /></S><S c="w-[22px]"><Tang /></S>
        <Sel><Cen /></Sel>
        <S c="w-[23px]"><Quad /></S>
        <Sel><Inter /></Sel>
        <S c="w-[23px]"><Pt /></S>
        <S c="w-[23px]"><Sf /></S>
      </RB>
      {/* Main */}
      <div className="flex-1 flex border-b-2 border-[#a9a9a9] min-h-0 relative">
        {/* Resource bar */}
        <div className="w-[17px] flex flex-col bg-[#dbdbdb] border-r border-[#a9a9a9] shrink-0 overflow-hidden">
          <div className="h-[125px] border-b border-[#a9a9a9] flex flex-col items-start overflow-hidden shrink-0">
            <div className="h-[24px] -ml-[2px] flex items-center">{leftIcon.gear}</div>
            <div className="h-[46px] mt-[16px] -ml-[1px] flex items-center">{leftIcon.asm}</div>
            <div className="h-[26px] mt-[6px] flex items-center">{leftIcon.con}</div>
          </div>
          <div className="h-[36px] bg-white flex items-end pb-[1px] shrink-0">{leftIcon.part}</div>
          <div className="flex-1 border-t border-[#a9a9a9] flex flex-col">
            <div className="h-[46px] flex items-center">{leftIcon.books}</div>
            <div className="h-[74px] flex items-center">{leftIcon.wifi}</div>
            <div className="h-[34px] flex items-center">{leftIcon.doc}</div>
            <div className="h-[72px] flex items-center">{leftIcon.clock}</div>
            <div className="h-[12px] flex items-center">{leftIcon.ham}</div>
          </div>
        </div>
        {/* Navigator panel */}
        <div className="w-[332px] bg-white border-r border-[#a9a9a9] flex flex-col justify-end pb-[6px] shrink-0">
          <div className="ml-[6px] mr-[10px] border-x border-[#dcdcdc] bg-white">
            <div className="h-[15px] flex border-b border-[#ececec]"><div className="w-[200px] border-r border-[#ececec]" /><div className="w-[100px] border-r border-[#ececec]" /></div>
            <div className="h-[20px] flex bg-[#f9f9f9] border-b border-[#ececec]"><div className="w-[200px] border-r border-[#ececec]" /><div className="w-[100px] border-r border-[#ececec]" /></div>
            <div className="h-[15px] flex"><div className="w-[200px] border-r border-[#ececec]" /><div className="w-[100px] border-r border-[#ececec]" /></div>
            <div className="h-[16px] bg-[#f0f0f0] flex items-center">
              <div className="w-[17px] flex justify-center text-[#555]"><svg width="7" height="9" viewBox="0 0 7 9"><path d="M5.5 1L2 4.5L5.5 8" fill="none" stroke="#555" strokeWidth="2" /></svg></div>
              <div className="w-[216px] h-full bg-[#c9c9c9]" />
              <div className="flex-1" />
              <div className="w-[17px] flex justify-center"><svg width="7" height="9" viewBox="0 0 7 9"><path d="M1.5 1L5 4.5L1.5 8" fill="none" stroke="#555" strokeWidth="2" /></svg></div>
            </div>
          </div>
          <div className="ml-[6px] mr-[10px] mt-[3px] h-[5px] bg-[#dadada] border border-[#a9a9a9]" />
          <div className="ml-[6px] mr-[10px] mt-[1px]">
            <Fold>相依性</Fold>
            <Fold>细节</Fold>
            <Fold>预览</Fold>
          </div>
        </div>
        {/* Graphics */}
        <div className="flex-1 bg-[#d2d3d5] relative overflow-hidden">
          <CSYS />
          <Triad />
          <div className="absolute left-[510px] top-[362px] flex gap-[8px]">
            <Logo />
            <div className="flex flex-col items-start pt-[5px]">
              <span className="text-[41px] leading-[46px] font-bold text-[#e5e6e7] whitespace-nowrap">3D世界网</span>
              <span className="text-[13px] leading-[14px] mt-[2px] tracking-[4.6px] text-[#e3e4e5] whitespace-nowrap [font-family:'Liberation_Sans',sans-serif]">WWW.3DSJW.COM</span>
            </div>
          </div>
        </div>
        {/* Dialog */}
        <div className="absolute left-[21px] top-0 w-[329px] h-[295px] bg-[#f0f0f0] border-b border-[#dcdcdc] flex flex-col">
          <div className="h-[24px] bg-[#559fb9] flex items-center pl-[8px] pr-[7px] shrink-0">
            <svg width="15" height="15" viewBox="0 0 15 15" className="shrink-0"><circle cx="7.5" cy="7.5" r="4" fill="none" stroke="#fff" strokeWidth="3" /><circle cx="7.5" cy="7.5" r="6" fill="none" stroke="#fff" strokeWidth="2" strokeDasharray="2.5 2.2" /></svg>
            <span className="ml-[9px] text-[13px] text-[#e8f3f7] flex-1">创建草图</span>
            <svg width="14" height="14" viewBox="0 0 14 14" className="mr-[7px] mt-[2px]"><path d="M3 2.5A5.3 5.3 0 1 0 8 2" fill="none" stroke="#fff" strokeWidth="1.8" /></svg>
            <svg width="13" height="13" viewBox="0 0 13 13"><path d="M1.5 1.5L11.5 11.5M11.5 1.5L1.5 11.5" stroke="#fff" strokeWidth="1.8" /></svg>
          </div>
          <div className="mx-[6px] mt-[4px] h-[64px] bg-white border-b-2 border-[#d6d6d6] px-[7px] pr-[9px] shrink-0">
            <div className="h-[26px] -mr-[3px] flex items-center justify-between text-[14px] text-[#1c7b99]"><span>草图类型</span><Chevron up /></div>
            <DSel c="w-[298px] ml-[2px] mt-[5px] h-[25px]">
              <svg width="15" height="15" viewBox="0 0 15 15" className="shrink-0"><path d="M3 2L14 4V14L5 13Z" fill="#fff" stroke="#333" /><path d="M1 1L8 7L6 8L1 3Z" fill="#e7b92f" stroke="#a33" strokeWidth=".5" /></svg>
              <span>在平面上</span>
            </DSel>
          </div>
          <div className="mx-[6px] mt-[4px] h-[151px] bg-white border-b-2 border-[#d6d6d6] px-[7px] pr-[9px] shrink-0">
            <div className="h-[26px] -mr-[3px] flex items-center justify-between text-[14px] text-[#1c7b99]"><span>草图 CSYS</span><Chevron up /></div>
            <div className="ml-[2px] h-[25px] mt-[4px] flex items-center text-[12px] text-[#222]"><span className="w-[157px] shrink-0">平面方法</span><DSel c="w-[141px] h-[25px]"><span>自动判断</span></DSel></div>
            <div className="ml-[2px] h-[25px] mt-[2px] flex items-center text-[12px] text-[#222]"><span className="w-[157px] shrink-0">参考</span><DSel c="w-[141px] h-[25px]"><span>水平</span></DSel></div>
            <div className="ml-[2px] h-[25px] mt-[2px] flex items-center text-[12px] text-[#222]"><span className="w-[157px] shrink-0">原点方法</span><DSel c="w-[141px] h-[25px]"><span>指定点</span></DSel></div>
            <div className="ml-[2px] h-[32px] mt-[2px] flex items-center w-[298px]">
              <div className="w-[221px] h-full bg-[#fddc77] flex items-center pl-[2px] text-[12px] text-[#222] shrink-0">
                <svg width="12" height="12" viewBox="0 0 12 12" className="ml-[1px]"><path d="M6 0.5V11.5M1.2 3.2L10.8 8.8M1.2 8.8L10.8 3.2" stroke="#d81e1e" strokeWidth="2" /></svg>
                <span className="ml-[5px]">指定 CSYS</span>
              </div>
              <div className="ml-[2px] w-[24px] h-[24px] bg-white border border-[#9a9a9a] flex items-center justify-center shrink-0">
                <svg width="20" height="20" viewBox="0 0 20 20"><path d="M11 12V2" stroke="#1a2fd0" strokeWidth="1.4" /><path d="M9 4L11 0L13 4Z" fill="#1a2fd0" /><path d="M11 12L17 7" stroke="#2ea84a" strokeWidth="1.4" /><path d="M11 12L18 15" stroke="#d81e1e" strokeWidth="1.4" /><path d="M1 11C2 15 6 17 9 16" stroke="#d9822b" strokeWidth="2" fill="none" /><path d="M12 18H19" stroke="#111" strokeWidth="2" strokeDasharray="2 1" /></svg>
              </div>
              <div className="ml-[2px] w-[30px] h-full bg-[#fddc77] flex items-center justify-center shrink-0">
                <svg width="26" height="26" viewBox="0 0 26 26"><path d="M1 24L11 9" stroke="#777" strokeWidth="1.2" /><path d="M14 1L8 11H12L8 17L17 8H13L17 1Z" fill="#f2c61f" stroke="#777" strokeWidth=".6" /><path d="M14 20V9" stroke="#1a2fd0" strokeWidth="1.5" /><path d="M12 11L14 6L16 11Z" fill="#1a2fd0" /><path d="M14 20L24 14" stroke="#2ea84a" strokeWidth="1.5" /><path d="M14 20L24 24" stroke="#d81e1e" strokeWidth="1.5" /></svg>
              </div>
              <div className="w-[1px] h-full bg-white shrink-0" />
              <div className="w-[17px] h-full bg-[#fddc77] flex items-center justify-center shrink-0"><Tri w={6} /></div>
            </div>
          </div>
          <div className="flex justify-end pr-[17px] gap-[5px] mt-[12px] text-[12px]">
            <div className="w-[54px] h-[25px] bg-[#72b2c9] text-[#e4f1f5] flex items-center justify-center">确定</div>
            <div className="w-[54px] h-[25px] bg-[#dedede] border border-[#a9a9a9] text-[#222] flex items-center justify-center">取消</div>
          </div>
        </div>
      </div>
      <div className="h-[5px] shrink-0" />
    </div>
  );
}
